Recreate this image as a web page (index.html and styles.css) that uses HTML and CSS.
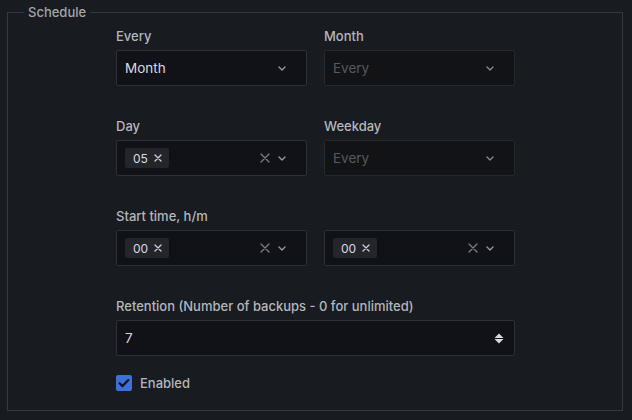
FILE: index.html
```html
<!DOCTYPE html>
<html>
<head>
<meta charset="utf-8">
<link rel="stylesheet" href="styles.css">
</head>
<body>
<fieldset class="schedule">
  <legend class="legend">Schedule</legend>
  <div class="body">
    <div class="grid">
      <div class="field">
        <label class="label">Every</label>
        <div class="select">
          <span class="value">Month</span>
          <span class="icons">
            <svg class="chev" viewBox="0 0 8 5" width="8" height="5"><path d="M1 1l3 3 3-3" fill="none" stroke="currentColor" stroke-width="1.3" stroke-linecap="round" stroke-linejoin="round"/></svg>
          </span>
        </div>
      </div>
      <div class="field">
        <label class="label">Month</label>
        <div class="select disabled">
          <span class="placeholder">Every</span>
          <span class="icons">
            <svg class="chev" viewBox="0 0 8 5" width="8" height="5"><path d="M1 1l3 3 3-3" fill="none" stroke="currentColor" stroke-width="1.3" stroke-linecap="round" stroke-linejoin="round"/></svg>
          </span>
        </div>
      </div>

      <div class="field">
        <label class="label">Day</label>
        <div class="select multi">
          <span class="tag">05 <svg class="tagx" viewBox="0 0 8 8" width="8" height="8"><path d="M1 1l6 6M7 1l-6 6" stroke="currentColor" stroke-width="1.3" stroke-linecap="round"/></svg></span>
          <span class="icons">
            <svg class="clear" viewBox="0 0 10 10" width="10" height="10"><path d="M1 1l8 8M9 1l-8 8" stroke="currentColor" stroke-width="1.2" stroke-linecap="round"/></svg>
            <svg class="chev" viewBox="0 0 8 5" width="8" height="5"><path d="M1 1l3 3 3-3" fill="none" stroke="currentColor" stroke-width="1.3" stroke-linecap="round" stroke-linejoin="round"/></svg>
          </span>
        </div>
      </div>
      <div class="field">
        <label class="label">Weekday</label>
        <div class="select disabled">
          <span class="placeholder">Every</span>
          <span class="icons">
            <svg class="chev" viewBox="0 0 8 5" width="8" height="5"><path d="M1 1l3 3 3-3" fill="none" stroke="currentColor" stroke-width="1.3" stroke-linecap="round" stroke-linejoin="round"/></svg>
          </span>
        </div>
      </div>

      <div class="field">
        <label class="label">Start time, h/m</label>
        <div class="select multi">
          <span class="tag">00 <svg class="tagx" viewBox="0 0 8 8" width="8" height="8"><path d="M1 1l6 6M7 1l-6 6" stroke="currentColor" stroke-width="1.3" stroke-linecap="round"/></svg></span>
          <span class="icons">
            <svg class="clear" viewBox="0 0 10 10" width="10" height="10"><path d="M1 1l8 8M9 1l-8 8" stroke="currentColor" stroke-width="1.2" stroke-linecap="round"/></svg>
            <svg class="chev" viewBox="0 0 8 5" width="8" height="5"><path d="M1 1l3 3 3-3" fill="none" stroke="currentColor" stroke-width="1.3" stroke-linecap="round" stroke-linejoin="round"/></svg>
          </span>
        </div>
      </div>
      <div class="field">
        <label class="label">&nbsp;</label>
        <div class="select multi">
          <span class="tag">00 <svg class="tagx" viewBox="0 0 8 8" width="8" height="8"><path d="M1 1l6 6M7 1l-6 6" stroke="currentColor" stroke-width="1.3" stroke-linecap="round"/></svg></span>
          <span class="icons">
            <svg class="clear" viewBox="0 0 10 10" width="10" height="10"><path d="M1 1l8 8M9 1l-8 8" stroke="currentColor" stroke-width="1.2" stroke-linecap="round"/></svg>
            <svg class="chev" viewBox="0 0 8 5" width="8" height="5"><path d="M1 1l3 3 3-3" fill="none" stroke="currentColor" stroke-width="1.3" stroke-linecap="round" stroke-linejoin="round"/></svg>
          </span>
        </div>
      </div>

      <div class="field wide">
        <label class="label">Retention (Number of backups - 0 for unlimited)</label>
        <div class="select">
          <span class="value">7</span>
          <span class="icons">
            <svg class="spin" viewBox="0 0 10 11" width="10" height="11"><path d="M5 0.5L9.5 5H0.5z M0.5 6H9.5L5 10.5z" fill="currentColor"/></svg>
          </span>
        </div>
      </div>
    </div>
    <div class="check">
      <span class="box"><svg viewBox="0 0 16 16" width="16" height="16"><path d="M3.6 8.2l2.9 2.9 5.9-6" fill="none" stroke="#111217" stroke-width="2.2" stroke-linecap="round" stroke-linejoin="round"/></svg></span>
      <span class="check-label">Enabled</span>
    </div>
  </div>
</fieldset>
</body>
</html>
```
FILE: styles.css
```css
html, body {
  margin: 0;
  padding: 0;
  background: #181b1f;
  font-family: Inter, "Noto Sans", sans-serif;
  color: #ccccdc;
}
.schedule {
  margin: 0 9px 0 7px;
  padding: 0;
  border: 1px solid #36383d;
  border-radius: 0;
  min-width: 0;
}
.legend {
  margin-left: 16px;
  padding: 0 4px;
  font-size: 13px;
  font-weight: 500;
  line-height: 24px;
  color: #a3a6ad;
}
.body {
  padding: 3px 0 19px 108px;
}
.grid {
  display: grid;
  grid-template-columns: 191px 191px;
  column-gap: 17px;
  row-gap: 31px;
}
.wide {
  grid-column: 1 / span 2;
}
.field {
  display: flex;
  flex-direction: column;
}
.label {
  font-size: 13px;
  font-weight: 500;
  line-height: 19px;
  margin-bottom: 4px;
  color: #b4b6bc;
}
.select {
  box-sizing: border-box;
  height: 36px;
  background: #111217;
  border: 1px solid #2e3035;
  border-radius: 2px;
  display: flex;
  align-items: center;
  padding: 0 20px 0 8px;
  font-size: 13.5px;
}
.select.disabled {
  border-color: #26282c;
  background: #121317;
}
.value {
  flex: 1;
  color: #d8d9e0;
}
.placeholder {
  flex: 1;
  color: #55585e;
}
.icons {
  display: flex;
  align-items: center;
  gap: 8px;
  margin-left: auto;
}
.chev {
  color: #9a9ca3;
  display: block;
}
.disabled .chev {
  color: #8a8c93;
}
.clear {
  color: #7e8087;
  display: block;
}
.spin {
  color: #d6d8de;
  display: block;
  margin-right: -16px;
}
.tag {
  display: inline-flex;
  align-items: center;
  gap: 6px;
  height: 20px;
  padding: 0 7px 0 8px;
  background: #23252b;
  border-radius: 2px;
  font-size: 12px;
  color: #d8d9e0;
}
.tagx {
  color: #d0d1d8;
  display: block;
}
.check {
  display: flex;
  align-items: center;
  gap: 8px;
  margin-top: 19px;
  height: 16px;
}
.box {
  width: 16px;
  height: 16px;
  background: #3d71d9;
  border-radius: 2px;
  display: block;
}
.box svg {
  display: block;
}
.check-label {
  font-size: 13px;
  font-weight: 500;
  color: #b4b6bc;
}
```
